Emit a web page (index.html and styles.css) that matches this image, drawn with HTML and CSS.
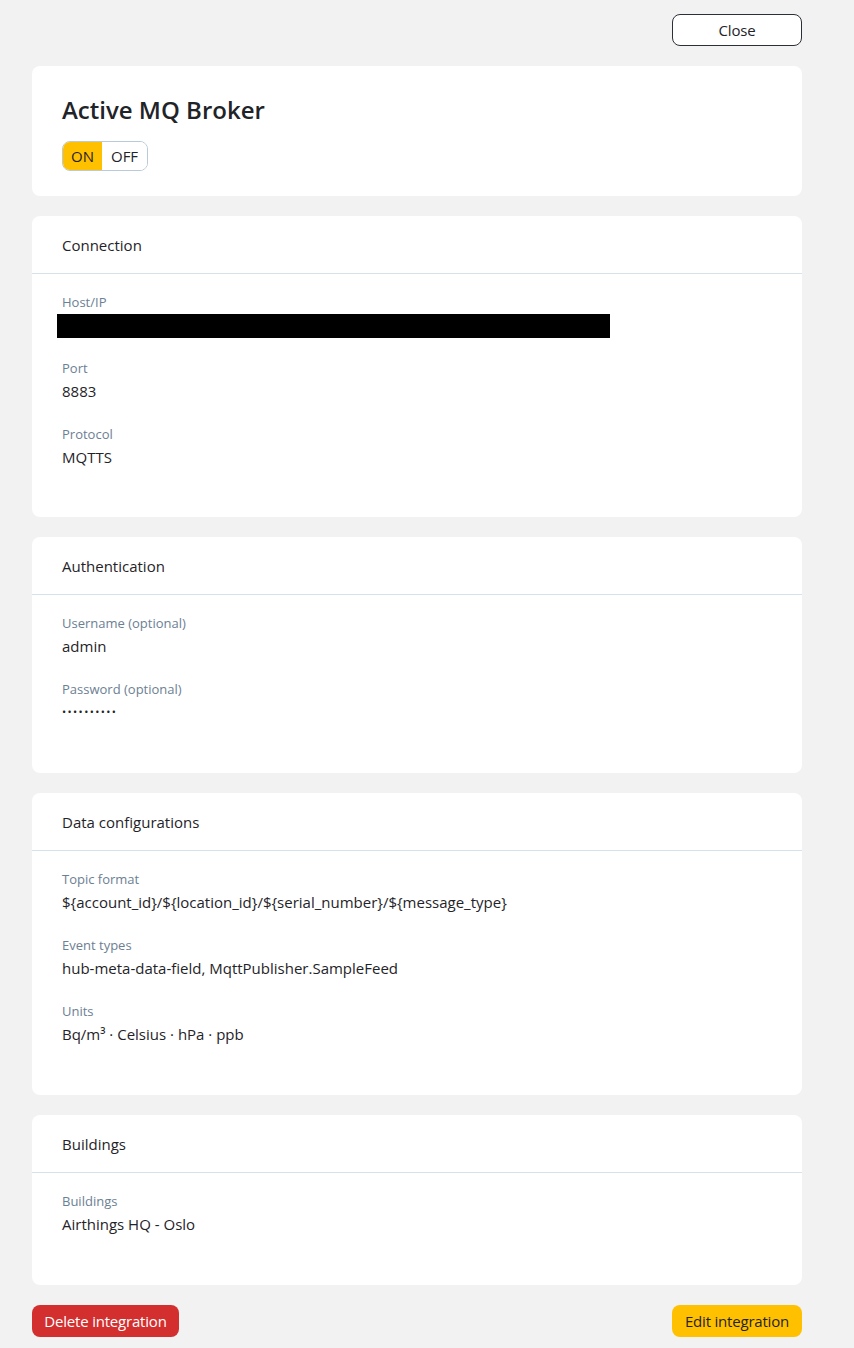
FILE: index.html
```html
<!DOCTYPE html>
<html>
<head>
<meta charset="utf-8">
<link rel="stylesheet" href="styles.css">
</head>
<body>
<div class="page">
  <div class="topbar">
    <button class="btn btn-outline">Close</button>
  </div>

  <section class="card intro">
    <h1 class="title">Active MQ Broker</h1>
    <div class="toggle">
      <span class="seg seg-on">ON</span>
      <span class="seg seg-off">OFF</span>
    </div>
  </section>

  <section class="card">
    <div class="card-head">Connection</div>
    <div class="card-body card-body-tight">
      <div class="field">
        <div class="label">Host/IP</div>
        <div class="redacted"></div>
      </div>
      <div class="field">
        <div class="label">Port</div>
        <div class="value">8883</div>
      </div>
      <div class="field">
        <div class="label">Protocol</div>
        <div class="value">MQTTS</div>
      </div>
    </div>
  </section>

  <section class="card">
    <div class="card-head">Authentication</div>
    <div class="card-body">
      <div class="field">
        <div class="label">Username (optional)</div>
        <div class="value">admin</div>
      </div>
      <div class="field">
        <div class="label">Password (optional)</div>
        <div class="value dots">••••••••••</div>
      </div>
    </div>
  </section>

  <section class="card">
    <div class="card-head">Data configurations</div>
    <div class="card-body">
      <div class="field">
        <div class="label">Topic format</div>
        <div class="value">${account_id}/${location_id}/${serial_number}/${message_type}</div>
      </div>
      <div class="field">
        <div class="label">Event types</div>
        <div class="value">hub-meta-data-field, MqttPublisher.SampleFeed</div>
      </div>
      <div class="field">
        <div class="label">Units</div>
        <div class="value">Bq/m³ · Celsius · hPa · ppb</div>
      </div>
    </div>
  </section>

  <section class="card">
    <div class="card-head">Buildings</div>
    <div class="card-body">
      <div class="field">
        <div class="label">Buildings</div>
        <div class="value">Airthings HQ - Oslo</div>
      </div>
    </div>
  </section>

  <div class="actions">
    <button class="btn btn-danger">Delete integration</button>
    <button class="btn btn-primary">Edit integration</button>
  </div>
</div>
</body>
</html>
```

FILE: styles.css
```css
* { box-sizing: border-box; }
html, body {
  margin: 0;
  padding: 0;
  background: #f2f2f2;
}
body {
  font-family: "Open Sans", "Noto Sans", sans-serif;
  color: #1f2429;
}
.page {
  width: 770px;
  margin-left: 32px;
  padding-top: 14px;
  display: flex;
  flex-direction: column;
  gap: 20px;
}
.topbar {
  display: flex;
  justify-content: flex-end;
}
.btn {
  font-family: "Open Sans", "Noto Sans", sans-serif;
  font-size: 15px;
  height: 32px;
  border-radius: 8px;
  padding: 0 10px;
  cursor: pointer;
  line-height: 30px;
  letter-spacing: -0.2px;
}
.btn-outline {
  width: 130px;
  background: #ffffff;
  border: 1px solid #2b3036;
  color: #1f2429;
}
.card {
  background: #ffffff;
  border-radius: 8px;
}
.intro {
  padding: 28px 30px 25px;
  height: 130px;
}
.title {
  margin: 0;
  font-size: 24px;
  line-height: 32px;
  font-weight: 600;
  letter-spacing: 0;
  color: #1f2429;
}
.toggle {
  margin-top: 15px;
  display: inline-flex;
  height: 30px;
  border: 1px solid #b9cad8;
  border-radius: 8px;
  overflow: hidden;
}
.seg {
  font-size: 15px;
  line-height: 28px;
  color: #1f2429;
  background: #ffffff;
  text-align: center;
  letter-spacing: -0.1px;
}
.seg-on {
  background: #ffc000;
  width: 39px;
}
.seg-off {
  width: 45px;
}
.card-head {
  height: 58px;
  padding: 0 30px;
  display: flex;
  align-items: center;
  font-size: 15px;
  color: #1f2429;
  border-bottom: 1px solid #d6e1ea;
}
.card-body {
  padding: 19px 30px 50px;
  display: flex;
  flex-direction: column;
  gap: 23px;
}
.card-body-tight {
  padding-bottom: 49px;
}
.label {
  font-size: 13px;
  line-height: 18px;
  color: #6c8093;
  margin-bottom: 3px;
}
.value {
  font-size: 15px;
  line-height: 22px;
  color: #1f2429;
}
.dots {
  font-size: 11px;
  letter-spacing: 1.4px;
}
.redacted {
  margin-left: -5px;
  margin-top: 1px;
  margin-bottom: -2px;
  width: 553px;
  height: 24px;
  background: #000000;
}
.actions {
  display: flex;
  justify-content: space-between;
  padding-bottom: 10px;
}
.btn-danger {
  width: 147px;
  background: #d32f2f;
  border: none;
  color: #ffffff;
  line-height: 32px;
}
.btn-primary {
  width: 130px;
  background: #ffc000;
  border: none;
  color: #1f2429;
  line-height: 32px;
}
```
